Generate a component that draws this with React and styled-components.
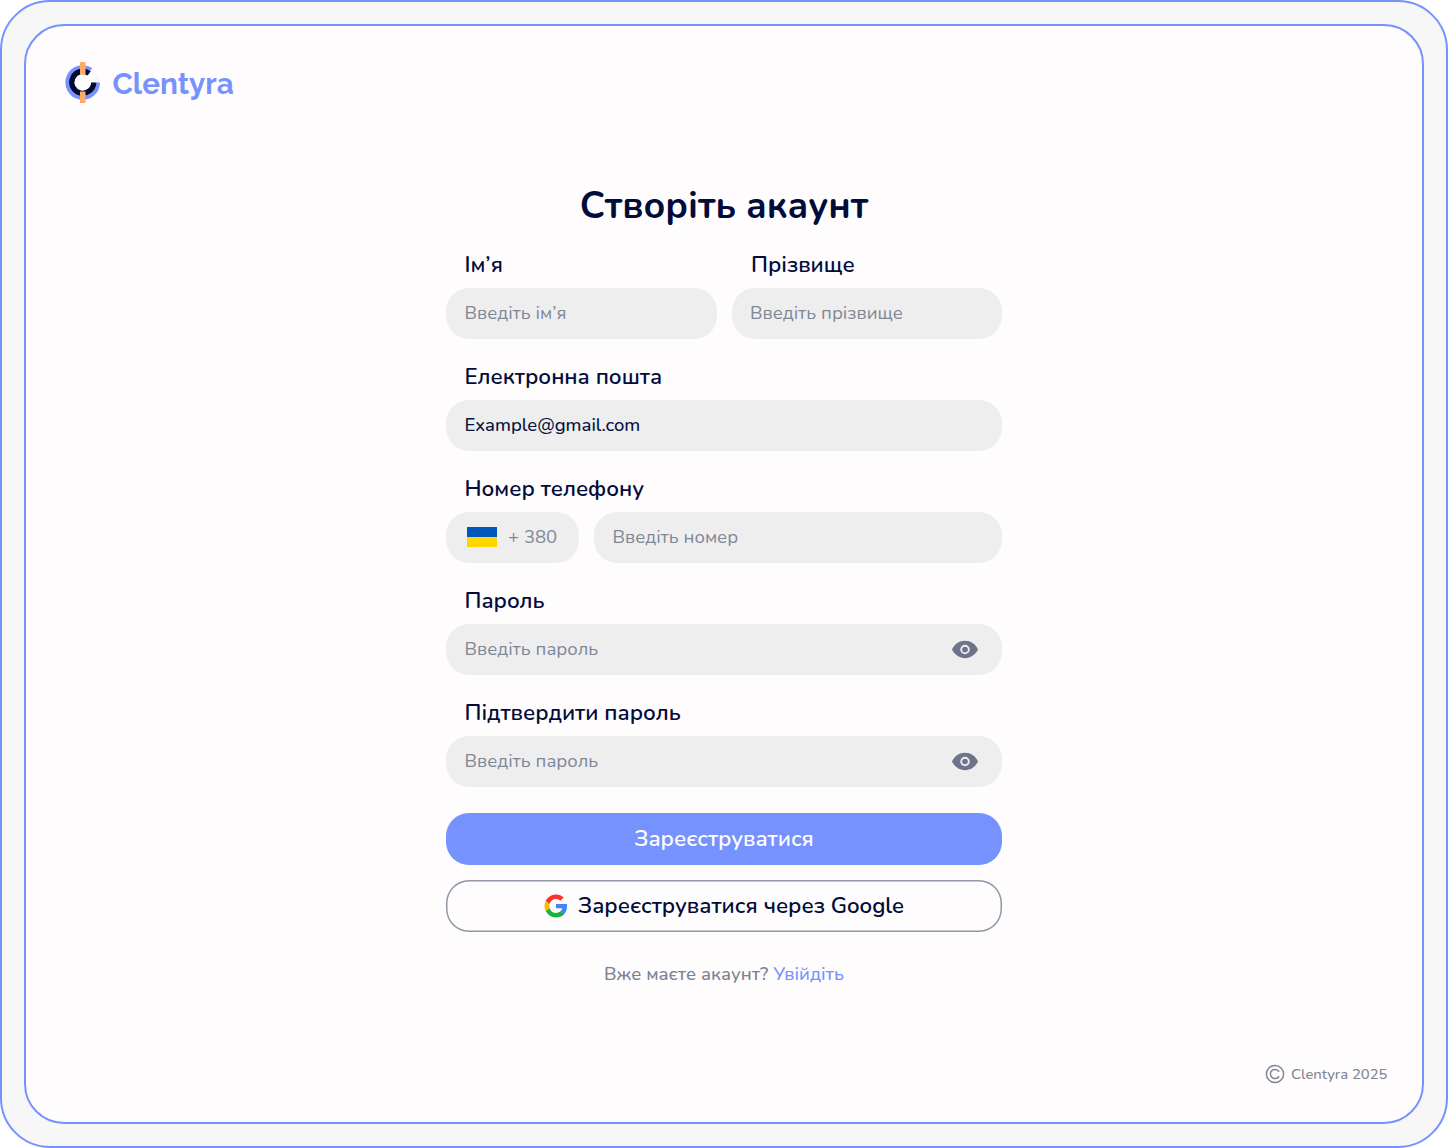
import React from "react";
import styled, { createGlobalStyle } from "styled-components";

const GlobalStyle = createGlobalStyle`
  *, *::before, *::after { box-sizing: border-box; }
  body { margin: 0; background: #ffffff; font-family: "Nunito", "Lato", "Open Sans", sans-serif; }
`;

const Frame = styled.div`
  width: 100%;
  height: 1148px;
  padding: 22px;
  background: #f7f7f7;
  border: 2px solid #7692ff;
  border-radius: 50px;
  display: flex;
`;

const Panel = styled.main`
  flex: 1;
  display: flex;
  flex-direction: column;
  background: #fefcfd;
  border: 2px solid #7692ff;
  border-radius: 40px;
`;

const Header = styled.header`
  display: flex;
  align-items: center;
  gap: 10.5px;
  height: 114px;
  padding-left: 38px;
`;

const Brand = styled.span`
  padding-top: 2px;
  font-family: "Raleway", "Nunito", "Lato", sans-serif;
  font-size: 29.6px;
  line-height: 40px;
  font-weight: 700;
  color: #7692ff;
`;

const Form = styled.form`
  width: 556px;
  margin: 41px auto 0;
  display: flex;
  flex-direction: column;
`;

const Title = styled.h1`
  margin: 0;
  height: 50px;
  line-height: 50px;
  text-align: center;
  font-size: 37.05px;
  font-weight: 700;
  color: #020c3a;
`;

const Columns = styled.div`
  display: grid;
  grid-template-columns: ${(p) => p.$template || "1fr 1fr"};
  gap: 15px;
`;

const Field = styled.div`
  display: flex;
  flex-direction: column;
  height: 112px;
`;

const Label = styled.label`
  height: 56.5px;
  padding: 18.5px 0 0 ${(p) => p.$inset || 18.5}px;
  line-height: 30px;
  font-size: 22.23px;
  font-weight: 600;
  color: #020c3a;
`;

const Box = styled.div`
  display: flex;
  align-items: center;
  justify-content: space-between;
  height: 51.5px;
  padding: 0 23px 0 18.5px;
  border-radius: 23px;
  background: #eeeeee;
`;

const Value = styled.span`
  font-size: 18.52px;
  line-height: 26px;
  white-space: nowrap;
  font-weight: ${(p) => (p.$filled ? 500 : 400)};
  color: ${(p) => (p.$filled ? "#0a1440" : "#7f8797")};
`;

const Code = styled(Box)`
  justify-content: flex-start;
  gap: 11px;
  padding: 0 0 0 21px;
`;

const Flag = styled.span`
  width: 30px;
  height: 20px;
  background: linear-gradient(#0057b8 50%, #ffd700 50%);
`;

const Button = styled.button`
  display: flex;
  align-items: center;
  justify-content: center;
  gap: 10px;
  height: 52px;
  margin: 0 0 15px;
  padding: 0;
  border-radius: 23px;
  border: none;
  box-shadow: ${(p) => (p.$primary ? "none" : "inset 0 0 0 1.5px #9297a6")};
  background: ${(p) => (p.$primary ? "#7692ff" : "transparent")};
  color: ${(p) => (p.$primary ? "#fefcfd" : "#020c3a")};
  font-family: inherit;
  font-size: 22.23px;
  font-weight: 600;
`;

const Actions = styled.div`
  display: flex;
  flex-direction: column;
  margin-top: 22px;
`;

const Prompt = styled.p`
  margin: 14px 0 0;
  text-align: center;
  font-size: 18.52px;
  line-height: 26px;
  font-weight: 500;
  color: #7b8291;
`;

const Link = styled.a`
  color: #7692ff;
`;

const Footer = styled.footer`
  display: flex;
  align-items: center;
  justify-content: flex-end;
  gap: 6.5px;
  margin-top: auto;
  padding: 0 34.5px 38.5px 0;
  font-size: 14.82px;
  line-height: 20px;
  font-weight: 500;
  color: #7f8797;
`;

const Logo = () => (
  <svg width="38" height="44" viewBox="0 0 38 44" aria-hidden="true">
    <path d="M28.500 8.800L34.800 20.500" fill="none" stroke="#ededf0" strokeWidth="0.800" />
    <path d="M27.100 8.600A15.400 15.400 0 1 0 34.100 21.500" fill="none" stroke="#7692ff" strokeWidth="3.800" />
    <path d="M25.200 12.400A11 11 0 1 0 29.750 21.500" fill="none" stroke="#000b33" strokeWidth="5.300" />
    <path d="M16 1h5.500v12.500H16zM16 30.500h5.500v11.500H16z" fill="#ffab66" />
  </svg>
);

const Eye = () => (
  <svg width="28" height="20" viewBox="0 0 28 20" aria-hidden="true">
    <path d="M1 10.500C3.600 5.200 8.500 1.800 14 1.800s10.400 3.400 13 8.700c-2.600 5.300-7.500 8.700-13 8.700S3.600 15.800 1 10.500z" fill="#6b7489" />
    <circle cx="14" cy="10.500" r="3.800" fill="#6b7489" stroke="#eeeeee" strokeWidth="1.900" />
  </svg>
);

const Google = () => (
  <svg width="24" height="24" viewBox="0 0 48 48" aria-hidden="true">
    <path fill="#4285f4" d="M46.1 24.500c0-1.600-.1-3.100-.4-4.500H24v8.500h12.400c-.5 2.900-2.200 5.300-4.600 7v5.800h7.400c4.400-4 6.900-10 6.900-16.800z" />
    <path fill="#17b33a" d="M24 47c6.200 0 11.400-2 15.200-5.600l-7.400-5.800c-2.100 1.400-4.700 2.200-7.800 2.200-6 0-11-4-12.800-9.500H3.600v5.900C7.400 41.800 15.100 47 24 47z" />
    <path fill="#fbbc05" d="M11.200 28.400c-.5-1.400-.7-2.900-.7-4.400s.3-3 .7-4.400v-5.900H3.600C2 16.800 1 20.300 1 24s1 7.200 2.600 10.300z" />
    <path fill="#f8362b" d="M24 10.200c3.400 0 6.400 1.200 8.800 3.400l6.600-6.600C35.400 3.300 30.200 1 24 1 15.100 1 7.400 6.200 3.600 13.700l7.600 5.900C13 14.200 18 10.200 24 10.200z" />
  </svg>
);

const Copyright = () => (
  <svg width="20" height="20" viewBox="0 0 20 20" fill="none" stroke="#7f8797" strokeWidth="1.500" aria-hidden="true">
    <circle cx="10" cy="10" r="8.600" />
    <path d="M13.700 7.300a4.600 4.600 0 1 0 0 5.400" strokeLinecap="round" />
  </svg>
);

export default function App() {
  return (
    <>
      <GlobalStyle />
      <Frame>
        <Panel>
          <Header>
            <Logo />
            <Brand>Clentyra</Brand>
          </Header>
          <Form>
            <Title>Створіть акаунт</Title>
            <Columns>
              <Field>
                <Label>Ім’я</Label>
                <Box><Value>Введіть ім’я</Value></Box>
              </Field>
              <Field>
                <Label $inset={19.5}>Прізвище</Label>
                <Box><Value>Введіть прізвище</Value></Box>
              </Field>
            </Columns>
            <Field>
              <Label>Електронна пошта</Label>
              <Box><Value $filled>Example@gmail.com</Value></Box>
            </Field>
            <Field>
              <Label>Номер телефону</Label>
              <Columns $template="133px 1fr">
                <Code><Flag /><Value>+ 380</Value></Code>
                <Box><Value>Введіть номер</Value></Box>
              </Columns>
            </Field>
            <Field>
              <Label>Пароль</Label>
              <Box><Value>Введіть пароль</Value><Eye /></Box>
            </Field>
            <Field>
              <Label>Підтвердити пароль</Label>
              <Box><Value>Введіть пароль</Value><Eye /></Box>
            </Field>
            <Actions>
              <Button $primary type="button">Зареєструватися</Button>
              <Button type="button"><Google />Зареєструватися через Google</Button>
            </Actions>
            <Prompt>Вже маєте акаунт? <Link>Увійдіть</Link></Prompt>
          </Form>
          <Footer><Copyright />Clentyra 2025</Footer>
        </Panel>
      </Frame>
    </>
  );
}
